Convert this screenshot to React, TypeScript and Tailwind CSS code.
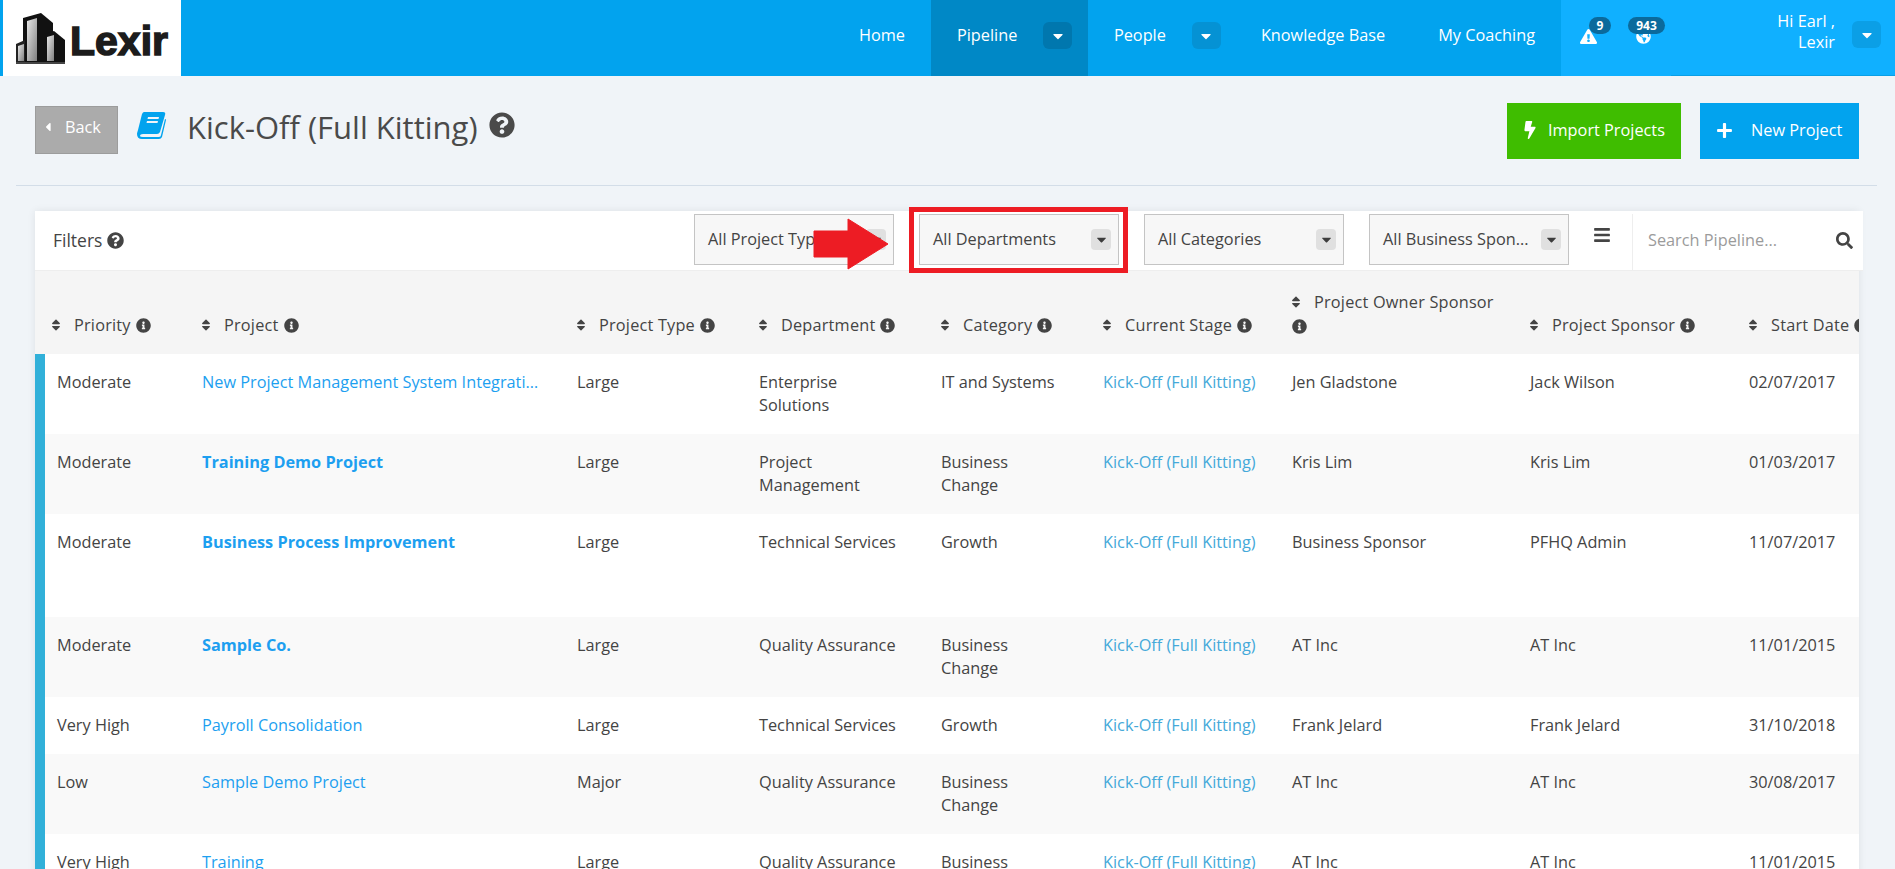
import { FC, ReactNode } from "react";
import {
  FaBars,
  FaBolt,
  FaCaretDown,
  FaCaretLeft,
  FaExclamationTriangle,
  FaGlobeAmericas,
  FaInfoCircle,
  FaPlus,
  FaQuestionCircle,
  FaSearch,
  FaSort,
} from "react-icons/fa";

interface Row {
  priority: string;
  project: string;
  bold?: boolean;
  type: string;
  department: string;
  category: string;
  owner: string;
  sponsor: string;
  start: string;
  height: string;
}

const rows: Row[] = [
  {
    priority: "Moderate",
    project: "New Project Management System Integration",
    type: "Large",
    department: "Enterprise\nSolutions",
    category: "IT and Systems",
    owner: "Jen Gladstone",
    sponsor: "Jack Wilson",
    start: "02/07/2017",
    height: "h-[80px]",
  },
  {
    priority: "Moderate",
    project: "Training Demo Project",
    bold: true,
    type: "Large",
    department: "Project\nManagement",
    category: "Business\nChange",
    owner: "Kris Lim",
    sponsor: "Kris Lim",
    start: "01/03/2017",
    height: "h-[80px]",
  },
  {
    priority: "Moderate",
    project: "Business Process Improvement",
    bold: true,
    type: "Large",
    department: "Technical Services",
    category: "Growth",
    owner: "Business Sponsor",
    sponsor: "PFHQ Admin",
    start: "11/07/2017",
    height: "h-[103px]",
  },
  {
    priority: "Moderate",
    project: "Sample Co.",
    bold: true,
    type: "Large",
    department: "Quality Assurance",
    category: "Business\nChange",
    owner: "AT Inc",
    sponsor: "AT Inc",
    start: "11/01/2015",
    height: "h-[80px]",
  },
  {
    priority: "Very High",
    project: "Payroll Consolidation",
    type: "Large",
    department: "Technical Services",
    category: "Growth",
    owner: "Frank Jelard",
    sponsor: "Frank Jelard",
    start: "31/10/2018",
    height: "h-[57px]",
  },
  {
    priority: "Low",
    project: "Sample Demo Project",
    type: "Major",
    department: "Quality Assurance",
    category: "Business\nChange",
    owner: "AT Inc",
    sponsor: "AT Inc",
    start: "30/08/2017",
    height: "h-[80px]",
  },
  {
    priority: "Very High",
    project: "Training",
    type: "Large",
    department: "Quality Assurance",
    category: "Business\nChange",
    owner: "AT Inc",
    sponsor: "AT Inc",
    start: "11/01/2015",
    height: "h-[80px]",
  },
];

const CaretButton: FC<{ className: string }> = ({ className }) => (
  <span className={`flex h-[27px] w-[29px] items-center justify-center rounded-md text-white ${className}`}>
    <FaCaretDown size={16} />
  </span>
);

const NavLink: FC<{ className?: string; children: ReactNode }> = ({ className = "", children }) => (
  <a className={`flex h-full items-center whitespace-nowrap pb-[5px] text-white ${className}`}>{children}</a>
);

const FilterSelect: FC<{ label: string }> = ({ label }) => (
  <div className="flex h-[51px] w-[200px] items-center justify-between border border-[#c4c4c4] bg-[#f7f7f7] pl-[13px] pr-[7px] text-[#444]">
    <span className="whitespace-nowrap">{label}</span>
    <span className="flex h-[21px] w-[20px] items-center justify-center rounded bg-[#e0e0e0] text-[#3d3d3d]">
      <FaCaretDown size={15} />
    </span>
  </div>
);

const HeadCell: FC<{ label: string; className?: string; wrap?: boolean }> = ({ label, className = "", wrap }) => (
  <th className={`pb-[16px] pl-3 pr-0 text-left align-bottom font-medium tracking-[0.2px] text-[#444] ${className}`}>
    <span className="inline-flex items-center whitespace-nowrap">
      <FaSort size={14} className="-ml-[3px] mr-[11px] shrink-0 text-[#444]" />
      {label}
      {!wrap && <FaInfoCircle size={15} className="ml-[5px] shrink-0 text-[#444]" />}
    </span>
    {wrap && (
      <span className="flex h-[23px] items-center">
        <FaInfoCircle size={15} className="text-[#444]" />
      </span>
    )}
  </th>
);

const LexirLogo: FC = () => (
  <svg viewBox="0 0 49 51" className="h-[51px] w-[49px] shrink-0">
    <defs>
      <linearGradient id="glass" x1="0" y1="0" x2="1" y2="1">
        <stop offset="0" stopColor="#e8e8e8" />
        <stop offset="1" stopColor="#808080" />
      </linearGradient>
    </defs>
    <path d="M7 5 L25 0 L37 10 V50 H7 Z" fill="#111" />
    <path d="M11 8 L21 5 V48 H11 Z" fill="url(#glass)" />
    <path d="M28 21 L38 18 L49 27 V50 H28 Z" fill="#111" />
    <path d="M31 24 L38 22 V48 H31 Z" fill="url(#glass)" />
    <path d="M0 31 L9 27 V50 H0 Z" fill="#222" />
    <path d="M2 33 L8 31 V48 H2 Z" fill="url(#glass)" />
    <path d="M0 49 H49 V51 H0 Z" fill="#444" />
  </svg>
);

const BookIcon: FC = () => (
  <svg viewBox="0 0 29 27" className="ml-[19px] mt-[9px] h-[27px] w-[29px] shrink-0 text-[#02a3ee]" fill="currentColor">
    <path d="M7 0 H26 Q29 0 28 3 L23 20 Q22 22 20 22 H6 Q3 22 3 24 Q3 25 6 25 H22 Q24 25 24 23 L28 7 Q29 7 29 8 L25 25 Q24 27 22 27 H5 Q0 27 0 22 Q0 21 1 18 L5 2 Q6 0 7 0 Z" />
    <path d="M11 5 H22 L21.5 7 H10.5 Z M10 9 H21 L20.5 11 H9.5 Z" fill="#f0f4f8" />
  </svg>
);

const App: FC = () => {
  return (
    <div className="h-screen overflow-hidden bg-[#f0f4f8] font-['Open_Sans',sans-serif] text-[16.3px] leading-[23px] text-[#444]">
      <header className="flex h-[76px] bg-[#02a3ee]">
        <div className="ml-[3px] flex w-[178px] items-center bg-white pl-[13px]">
          <LexirLogo />
          <span className="ml-[5px] pt-[6px] font-['Liberation_Sans',sans-serif] text-[41px] font-bold leading-none text-[#1c1c1c] [-webkit-text-stroke:1.5px_#1c1c1c]">
            Lexir
          </span>
        </div>
        <nav className="ml-auto flex h-full">
          <NavLink className="px-[26px]">Home</NavLink>
          <NavLink className="w-[157px] bg-[#0088c6] pl-[26px]">
            Pipeline
            <CaretButton className="ml-[26px] bg-[#0077ae]" />
          </NavLink>
          <NavLink className="pl-[26px]">
            People
            <CaretButton className="ml-[26px] bg-[#0592d4]" />
          </NavLink>
          <NavLink className="pl-[40px]">Knowledge Base</NavLink>
          <NavLink className="pl-[53px] pr-[26px]">My Coaching</NavLink>
        </nav>
        <div className="flex w-[334px] border-b bg-[#10b0ff] [border-image:linear-gradient(to_right,#10b0ff_110px,#0a9fe6_110px)_1]">
          <div className="relative ml-[19px] mt-[28px] h-[16px] w-[18px] text-white">
            <FaExclamationTriangle size={17} />
            <span className="absolute left-[9px] top-[-11px] flex h-[17px] w-[22px] items-center justify-center rounded-full bg-[#0b6a9c] text-[12px] font-bold leading-none">
              9
            </span>
          </div>
          <div className="relative ml-[38px] mt-[29px] h-[15px] w-[15px] text-white">
            <FaGlobeAmericas size={15} />
            <span className="absolute left-[-8px] top-[-12px] flex h-[17px] w-[37px] items-center justify-center rounded-full bg-[#0b6a9c] text-[12px] font-bold leading-none">
              943
            </span>
          </div>
          <div className="ml-auto mr-[14px] flex pt-[11px]">
            <div className="text-right font-medium leading-[21px] text-white">
              <div>Hi Earl ,</div>
              <div>Lexir</div>
            </div>
            <CaretButton className="ml-[17px] mt-[10px] bg-[#0b9fe6]" />
          </div>
        </div>
      </header>

      <main className="pl-[35px] pr-[36px] pt-[27px]">
        <div className="flex items-start">
          <a className="mt-[3px] flex h-[48px] w-[83px] items-center border border-[#9c9c9c] bg-[#ababab] pb-[6px] pl-[5px] text-white">
            <FaCaretLeft size={14} />
            <span className="ml-[10px]">Back</span>
          </a>
          <BookIcon />
          <h1 className="ml-[21px] mt-[5px] whitespace-nowrap text-[31px] leading-[38px] text-[#4a4a4a]">
            Kick-Off (Full Kitting)
          </h1>
          <FaQuestionCircle size={26} className="ml-[11px] mt-[9px] text-[#4a4a4a]" />
          <a className="ml-auto flex h-[56px] w-[174px] items-center bg-[#3fbd00] pb-[2px] pl-[14px] text-white">
            <FaBolt size={18} />
            <span className="ml-[9px] whitespace-nowrap">Import Projects</span>
          </a>
          <a className="ml-[19px] flex h-[56px] w-[159px] items-center bg-[#02a3ee] pb-[2px] pl-[16px] text-white">
            <FaPlus size={17} />
            <span className="ml-[18px] whitespace-nowrap">New Project</span>
          </a>
        </div>

        <div className="-ml-[19px] -mr-[18px] mt-[26px] h-px bg-[#d3dde8]" />

        <section className="mt-[25px] shadow-[0_0_8px_rgba(0,0,0,0.08)]">
          <div className="-mr-[4px] flex h-[60px] items-start border-b border-[#eeeeee] bg-white pt-[3px]">
            <div className="ml-[18px] mt-[15px] flex items-center text-[17.5px] font-medium">
              Filters
              <FaQuestionCircle size={17} className="ml-[5px] text-[#444]" />
            </div>
            <div className="ml-auto flex gap-[25px]">
              <FilterSelect label="All Project Types" />
              <FilterSelect label="All Departments" />
              <FilterSelect label="All Categories" />
              <FilterSelect label="All Business Spon..." />
            </div>
            <FaBars size={18} className="ml-[24px] mt-[12px] text-[#444]" />
            <div className="ml-[21px] flex h-[56px] w-[231px] items-center border-l border-[#eeeeee] pb-[3px] pl-[15px] pr-[10px]">
              <span className="whitespace-nowrap text-[#9b9b9b]">Search Pipeline...</span>
              <FaSearch size={17} className="ml-auto text-[#444]" />
            </div>
          </div>

          <div className="overflow-hidden">
            <table className="w-[1870px] table-fixed border-separate border-spacing-0">
              <colgroup>
                <col className="w-[155px]" />
                <col className="w-[375px]" />
                <col className="w-[182px]" />
                <col className="w-[182px]" />
                <col className="w-[162px]" />
                <col className="w-[189px]" />
                <col className="w-[238px]" />
                <col className="w-[219px]" />
                <col className="w-[168px]" />
              </colgroup>
              <thead className="bg-[#f5f5f5]">
                <tr className="h-[83px]">
                  <HeadCell label="Priority" className="pl-[17px]" />
                  <HeadCell label="Project" />
                  <HeadCell label="Project Type" />
                  <HeadCell label="Department" />
                  <HeadCell label="Category" />
                  <HeadCell label="Current Stage" />
                  <HeadCell label="Project Owner Sponsor" wrap />
                  <HeadCell label="Project Sponsor" />
                  <HeadCell label="Start Date" />
                </tr>
              </thead>
              <tbody>
                {rows.map((row, index) => (
                  <tr key={row.project} className={`${row.height} ${index % 2 === 1 ? "bg-[#f9f9f9]" : "bg-white"}`}>
                    <td className="border-l-[10px] border-l-[#31b0d9] pl-3 pt-[17px] align-top">{row.priority}</td>
                    <td className="px-3 pt-[17px] align-top">
                      <a className={`block w-[338px] truncate text-[#1d9ff0] ${row.bold ? "font-bold" : ""}`}>
                        {row.project}
                      </a>
                    </td>
                    <td className="px-3 pt-[17px] align-top">{row.type}</td>
                    <td className="whitespace-pre-line px-3 pt-[17px] align-top">{row.department}</td>
                    <td className="whitespace-pre-line px-3 pt-[17px] align-top">{row.category}</td>
                    <td className="whitespace-nowrap px-3 pt-[17px] align-top">
                      <a className="text-[#45a9d9]">Kick-Off (Full Kitting)</a>
                    </td>
                    <td className="px-3 pt-[17px] align-top">{row.owner}</td>
                    <td className="px-3 pt-[17px] align-top">{row.sponsor}</td>
                    <td className="px-3 pt-[17px] align-top">{row.start}</td>
                  </tr>
                ))}
              </tbody>
            </table>
          </div>
        </section>
      </main>

      {/* annotation drawn over the screenshot: red box and arrow */}
      <div className="absolute left-[909px] top-[207px] h-[66px] w-[219px] border-[5px] border-[#ed1c24]" />
      <svg className="absolute left-[813px] top-[218px] h-[52px] w-[76px]" viewBox="0 0 76 52">
        <path d="M1 13 H35 V1 L75 26 L35 51 V39 H1 Z" fill="#ed1c24" stroke="#ed1c24" strokeLinejoin="round" />
      </svg>
    </div>
  );
};

export default App;
